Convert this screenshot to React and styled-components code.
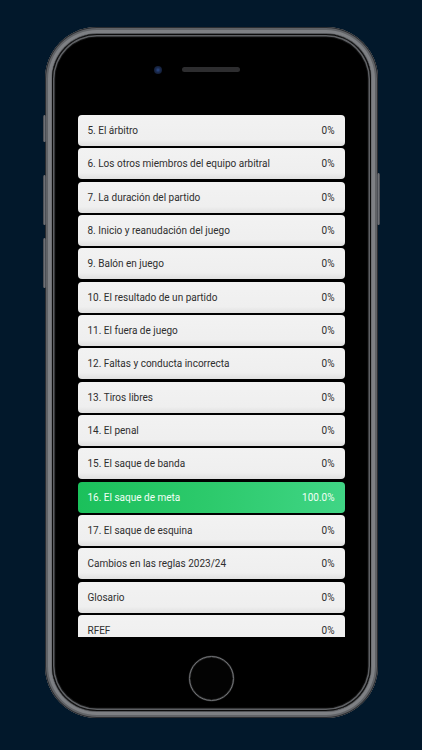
import React from "react";
import styled, { createGlobalStyle } from "styled-components";

const Global = createGlobalStyle`
  html, body { margin: 0; padding: 0; background: #02182b; }
  body { font-family: Roboto, "Liberation Sans", Arial, sans-serif; }
`;

const Page = styled.div`
  width: 422px;
  height: 750px;
  display: flex;
  justify-content: center;
  padding-top: 27px;
  box-sizing: border-box;
  background: #02182b;
  overflow: hidden;
`;

const Phone = styled.div`
  position: relative;
  width: 333px;
  height: 691px;
  box-sizing: border-box;
  border-radius: 52px;
  padding: 7px;
  background: linear-gradient(90deg, #3a3c40 0%, #75777b 1.5%, #5a5c60 3%, #4e5054 50%, #5a5c60 97%, #75777b 98.5%, #3a3c40 100%);
  box-shadow: inset 0 0 0 1px #2a2c30, inset 0 0 0 3px #606266, inset 0 0 0 6px #7e8084;
`;

const SideButton = styled.div`
  position: absolute;
  ${(p) => (p.$right ? "right: -2px;" : "left: -2px;")}
  top: ${(p) => p.$top}px;
  height: ${(p) => p.$h}px;
  width: 3px;
  border-radius: 1.5px;
  background: linear-gradient(90deg, #3b3e44, #6d7076, #3b3e44);
`;

const Body = styled.div`
  height: 100%;
  box-sizing: border-box;
  border-radius: 45px;
  background: #000;
  box-shadow: inset 0 0 0 1px #0b0b0b, inset 0 0 0 2.5px #5e6064, inset 0 0 0 3.5px #111;
  display: flex;
  flex-direction: column;
  align-items: center;
`;

const TopBar = styled.div`
  height: 81px;
  width: 100%;
  display: grid;
  grid-template-columns: 1fr auto 1fr;
  align-items: start;
  padding-top: 33px;
  box-sizing: border-box;
`;

const Camera = styled.div`
  justify-self: end;
  margin-right: 20px;
  margin-top: -1px;
  width: 8px;
  height: 8px;
  border-radius: 50%;
  background: radial-gradient(circle at 50% 50%, #2c4a8a 0%, #1a2a4e 40%, #0c1220 100%);
`;

const Speaker = styled.div`
  width: 58px;
  height: 5px;
  border-radius: 3px;
  background: #2d2d2f;
`;

const Screen = styled.div`
  width: 267px;
  height: 522px;
  overflow: hidden;
  display: flex;
  flex-direction: column;
  gap: 2.33px;
`;

const Row = styled.div`
  flex: 0 0 31px;
  height: 31px;
  box-sizing: border-box;
  border-radius: 4px;
  padding: 0 10px 0 10px;
  display: flex;
  align-items: center;
  justify-content: space-between;
  font-size: 10px;
  color: ${(p) => (p.$done ? "#f2fff6" : "#2e2e2e")};
  background: ${(p) =>
    p.$done
      ? "linear-gradient(90deg, #1bc05b 0%, #2dca6c 50%, #40d585 100%)"
      : "linear-gradient(180deg, #f2f2f2 0%, #efefef 80%, #e0e0e0 100%)"};
`;

const Label = styled.span`
  white-space: nowrap;
`;

const Percent = styled.span`
  white-space: nowrap;
`;

const Bottom = styled.div`
  flex: 1;
  width: 100%;
  display: flex;
  justify-content: center;
  padding-top: 19px;
  box-sizing: border-box;
`;

const HomeButton = styled.div`
  width: 43px;
  height: 43px;
  border-radius: 50%;
  border: 1.5px solid #707276;
  box-shadow: 0 0 0 0.5px #2a2a2a, inset 0 0 1px #999;
  background: #030303;
`;

const items = [
  ["5. El árbitro", "0%"],
  ["6. Los otros miembros del equipo arbitral", "0%"],
  ["7. La duración del partido", "0%"],
  ["8. Inicio y reanudación del juego", "0%"],
  ["9. Balón en juego", "0%"],
  ["10. El resultado de un partido", "0%"],
  ["11. El fuera de juego", "0%"],
  ["12. Faltas y conducta incorrecta", "0%"],
  ["13. Tiros libres", "0%"],
  ["14. El penal", "0%"],
  ["15. El saque de banda", "0%"],
  ["16. El saque de meta", "100.0%", true],
  ["17. El saque de esquina", "0%"],
  ["Cambios en las reglas 2023/24", "0%"],
  ["Glosario", "0%"],
  ["RFEF", "0%"],
];

export default function App() {
  return (
    <Page>
      <Global />
      <Phone>
        <SideButton $top={88} $h={27} />
        <SideButton $top={148} $h={50} />
        <SideButton $top={211} $h={50} />
        <SideButton $right $top={146} $h={52} />
        <Body>
          <TopBar>
            <Camera />
            <Speaker />
            <div />
          </TopBar>
          <Screen>
            {items.map(([label, pct, done]) => (
              <Row key={label} $done={done}>
                <Label>{label}</Label>
                <Percent>{pct}</Percent>
              </Row>
            ))}
          </Screen>
          <Bottom>
            <HomeButton />
          </Bottom>
        </Body>
      </Phone>
    </Page>
  );
}
